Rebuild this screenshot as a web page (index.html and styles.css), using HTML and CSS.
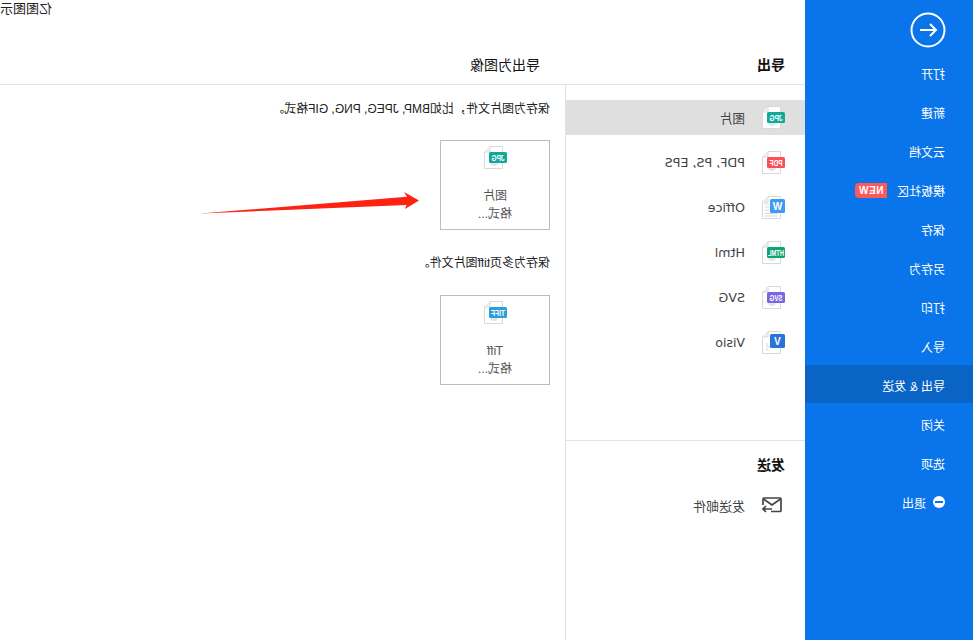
FILE: index.html
```html
<!DOCTYPE html>
<html lang="zh-CN">
<head>
    <meta charset="UTF-8">
    <title>亿图图示</title>
    <link rel="stylesheet" href="styles.css">
</head>
<body>
<div class="page">
    <svg width="0" height="0" class="defs">
        <symbol id="doc" viewBox="0 0 24 24">
            <path d="M4.5 .5H17L22.5 6V22.5H4.5Z" fill="#fff" stroke="#d9d9d9"/>
            <path d="M17 .5V6H22.5" fill="#f1f1f1" stroke="#d9d9d9"/>
        </symbol>
    </svg>

    <!-- Left menu -->
    <aside class="sidebar">
        <div class="back">
            <svg width="36" height="36" viewBox="0 0 36 36" fill="none" stroke="#fff" stroke-width="2">
                <circle cx="18" cy="18" r="16.5"/>
                <path d="M26 18H10M16 12l-6 6 6 6"/>
            </svg>
        </div>
        <ul class="menu">
            <li>打开</li>
            <li>新建</li>
            <li>云文档</li>
            <li>模板社区<span class="new">NEW</span></li>
            <li>保存</li>
            <li>另存为</li>
            <li>打印</li>
            <li>导入</li>
            <li class="active">导出 &amp; 发送</li>
            <li>关闭</li>
            <li>选项</li>
            <li><span class="exit"></span>退出</li>
        </ul>
    </aside>

    <main class="main">
        <div class="title">亿图图示</div>
        <div class="head">
            <h3 class="head-left">导出</h3>
            <h4 class="head-right">导出为图像</h4>
        </div>
        <div class="panes">
            <div class="types">
                <div class="export-list">
                    <div class="row selected">
                        <svg class="ficon" viewBox="0 0 24 24"><use href="#doc"/><circle cx="13" cy="16" r="4" fill="#e4e4e4"/><rect y="6" width="18" height="11" rx="1.5" fill="#12a99b"/><text x="9" y="14.8" textLength="13" lengthAdjust="spacingAndGlyphs" class="blabel">JPG</text></svg>
                        <span>图片</span>
                    </div>
                    <div class="row">
                        <svg class="ficon" viewBox="0 0 24 24"><use href="#doc"/><circle cx="13" cy="16" r="4" fill="#e4e4e4"/><rect y="6" width="18" height="11" rx="1.5" fill="#fb4f55"/><text x="9" y="14.8" textLength="13" lengthAdjust="spacingAndGlyphs" class="blabel">PDF</text></svg>
                        <span>PDF, PS, EPS</span>
                    </div>
                    <div class="row">
                        <svg class="ficon" viewBox="0 0 24 24"><use href="#doc"/><path d="M16 8H20M16 11H20M16 14H20M7 17.5H20M7 20H20" stroke="#d9d9d9"/><rect y="3" width="15" height="14" rx="1.5" fill="#3e9bf5"/><text x="7.5" y="14" class="blabel big">W</text></svg>
                        <span>Office</span>
                    </div>
                    <div class="row">
                        <svg class="ficon" viewBox="0 0 24 24"><use href="#doc"/><circle cx="13" cy="16" r="4" fill="#e4e4e4"/><rect y="6" width="18" height="11" rx="1.5" fill="#0ea574"/><text x="9" y="14.8" textLength="16" lengthAdjust="spacingAndGlyphs" class="blabel">HTML</text></svg>
                        <span>Html</span>
                    </div>
                    <div class="row">
                        <svg class="ficon" viewBox="0 0 24 24"><use href="#doc"/><circle cx="13" cy="16" r="4" fill="#e4e4e4"/><rect y="6" width="18" height="11" rx="1.5" fill="#7a67e0"/><text x="9" y="14.8" textLength="13" lengthAdjust="spacingAndGlyphs" class="blabel">SVG</text></svg>
                        <span>SVG</span>
                    </div>
                    <div class="row">
                        <svg class="ficon" viewBox="0 0 24 24"><use href="#doc"/><path d="M14 16H18V12M18 17V20" stroke="#d9d9d9" fill="none"/><rect y="3" width="15" height="14" rx="1.5" fill="#2a74d8"/><text x="7.5" y="14" class="blabel big">V</text></svg>
                        <span>Visio</span>
                    </div>
                </div>
                <div class="send">
                    <h3 class="send-title">发送</h3>
                    <div class="row">
                        <svg class="ficon mail" viewBox="0 0 20 16" fill="none" stroke="#444" stroke-width="1.7">
                            <path d="M11 14.5H2a1 1 0 0 1-1-1V2a1 1 0 0 1 1-1h16a1 1 0 0 1 1 1v6"/>
                            <path d="M1.5 2 10 8l8.5-6"/>
                            <path d="M10 12h9M16 9l3 3-3 3"/>
                        </svg>
                        <span>发送邮件</span>
                    </div>
                </div>
            </div>
            <div class="detail">
                <p class="desc">保存为图片文件，比如BMP, JPEG, PNG, GIF格式。</p>
                <div class="card">
                    <svg class="ficon" viewBox="0 0 24 24"><use href="#doc"/><circle cx="13" cy="16" r="4" fill="#e4e4e4"/><rect y="6" width="18" height="11" rx="1.5" fill="#12a99b"/><text x="9" y="14.8" textLength="13" lengthAdjust="spacingAndGlyphs" class="blabel">JPG</text></svg>
                    <div class="card-name">图片</div>
                    <div>格式...</div>
                </div>
                <p class="desc second">保存为多页tiff图片文件。</p>
                <div class="card">
                    <svg class="ficon" viewBox="0 0 24 24"><use href="#doc"/><circle cx="13" cy="16" r="4" fill="#e4e4e4"/><rect y="6" width="18" height="11" rx="1.5" fill="#2a9fd8"/><text x="9" y="14.8" textLength="14" lengthAdjust="spacingAndGlyphs" class="blabel">TIFF</text></svg>
                    <div class="card-name">Tiff</div>
                    <div>格式...</div>
                </div>
            </div>
        </div>
    </main>

    <!-- red annotation arrow -->
    <svg class="arrow" width="222" height="24" viewBox="553 191 222 24">
        <path d="M554 200.5 569 192 566 196.8 773 213.5 566.5 205 568 209Z" fill="#fe2211"/>
    </svg>
</div>
</body>
</html>
```

FILE: styles.css
```css
* {
    box-sizing: border-box;
}

html, body {
    margin: 0;
    padding: 0;
    background-color: #fff;
}

/* the whole window is shown flipped */
.page {
    position: relative;
    display: flex;
    width: 973px;
    height: 640px;
    overflow: hidden;
    transform: scaleX(-1);
    font-family: "Liberation Sans", "Noto Sans CJK SC", sans-serif;
    font-size: 12px;
    font-variant-ligatures: none;
    color: #333;
}

.defs {
    position: absolute;
}

/* Left menu */
.sidebar {
    flex: 0 0 168px;
    background-color: #0a75ea;
    color: #fff;
}

.back {
    height: 36px;
    margin: 12px 0 5px 27px;
}

.back svg {
    display: block;
}

.menu {
    display: flex;
    flex-direction: column;
    gap: 1px;
    list-style: none;
    margin: 0;
    padding: 0;
}

.menu li {
    display: flex;
    align-items: center;
    height: 38px;
    padding: 2px 0 0 28px;
}

.menu .active {
    background-color: #0a64c6;
}

.new {
    width: 32px;
    height: 15px;
    margin: 1px 0 0 10px;
    border-radius: 0 4px 4px 0;
    background-color: #ff585c;
    font-size: 10px;
    font-weight: bold;
    letter-spacing: .5px;
    line-height: 15px;
    text-align: center;
}

.exit {
    position: relative;
    width: 12px;
    height: 12px;
    margin-right: 7px;
    border-radius: 50%;
    background-color: #fff;
}

.exit::after {
    content: "";
    position: absolute;
    left: 2px;
    top: 5px;
    width: 8px;
    height: 2px;
    background-color: #0a75ea;
}

/* Main area */
.main {
    flex: 1;
    display: flex;
    flex-direction: column;
    min-width: 0;
}

.title {
    height: 16px;
    padding-top: 1px;
    font-size: 13px;
    line-height: 16px;
    text-align: right;
    color: #222;
}

.head {
    display: flex;
    align-items: flex-end;
    height: 69px;
    padding-bottom: 9px;
    border-bottom: 1px solid #e2e2e2;
}

.head-left, .head-right {
    margin: 0;
    font-size: 14px;
    line-height: 20px;
    color: #111;
}

.head-left {
    flex: 0 0 265px;
    padding-left: 20px;
}

.head-right {
    font-weight: normal;
}

.panes {
    flex: 1;
    display: flex;
}

.types {
    flex: 0 0 240px;
    border-right: 1px solid #e2e2e2;
}

.export-list {
    display: flex;
    flex-direction: column;
    gap: 10px;
    height: 356px;
    padding-top: 15px;
    border-bottom: 1px solid #e2e2e2;
}

.row {
    display: flex;
    align-items: center;
    gap: 16px;
    height: 35px;
    padding-left: 20px;
    font-family: "DejaVu Sans", "Noto Sans CJK SC", sans-serif;
    font-size: 12.7px;
    color: #444;
}

.row.selected {
    background-color: #dfdfdf;
}

.send .row {
    font-size: 13px;
}

.ficon {
    display: block;
    flex: none;
    width: 24px;
    height: 24px;
}

.ficon.mail {
    width: 20px;
    height: 16px;
    margin: -2px 1px 0 3px;
}

.blabel {
    fill: #fff;
    font-size: 8.5px;
    font-weight: bold;
    font-family: "Liberation Sans", sans-serif;
    text-anchor: middle;
}

.blabel.big {
    font-size: 10px;
}

.send-title {
    margin: 0;
    padding: 14px 0 13px 20px;
    font-size: 14px;
    line-height: 20px;
    color: #111;
}

/* Right pane */
.detail {
    flex: 1;
    padding: 15px 0 0 15px;
}

.desc {
    margin: 0;
    line-height: 18px;
    color: #222;
}

.desc.second {
    margin-top: 24px;
}

.card {
    display: flex;
    flex-direction: column;
    align-items: center;
    width: 110px;
    height: 90px;
    margin-top: 22px;
    padding-top: 5px;
    border: 1px solid #bcbcbc;
    line-height: 18px;
    color: #555;
}

.desc.second + .card {
    margin-top: 23px;
}

.card-name {
    margin-top: 17px;
}

.arrow {
    position: absolute;
    left: 553px;
    top: 191px;
}
```
